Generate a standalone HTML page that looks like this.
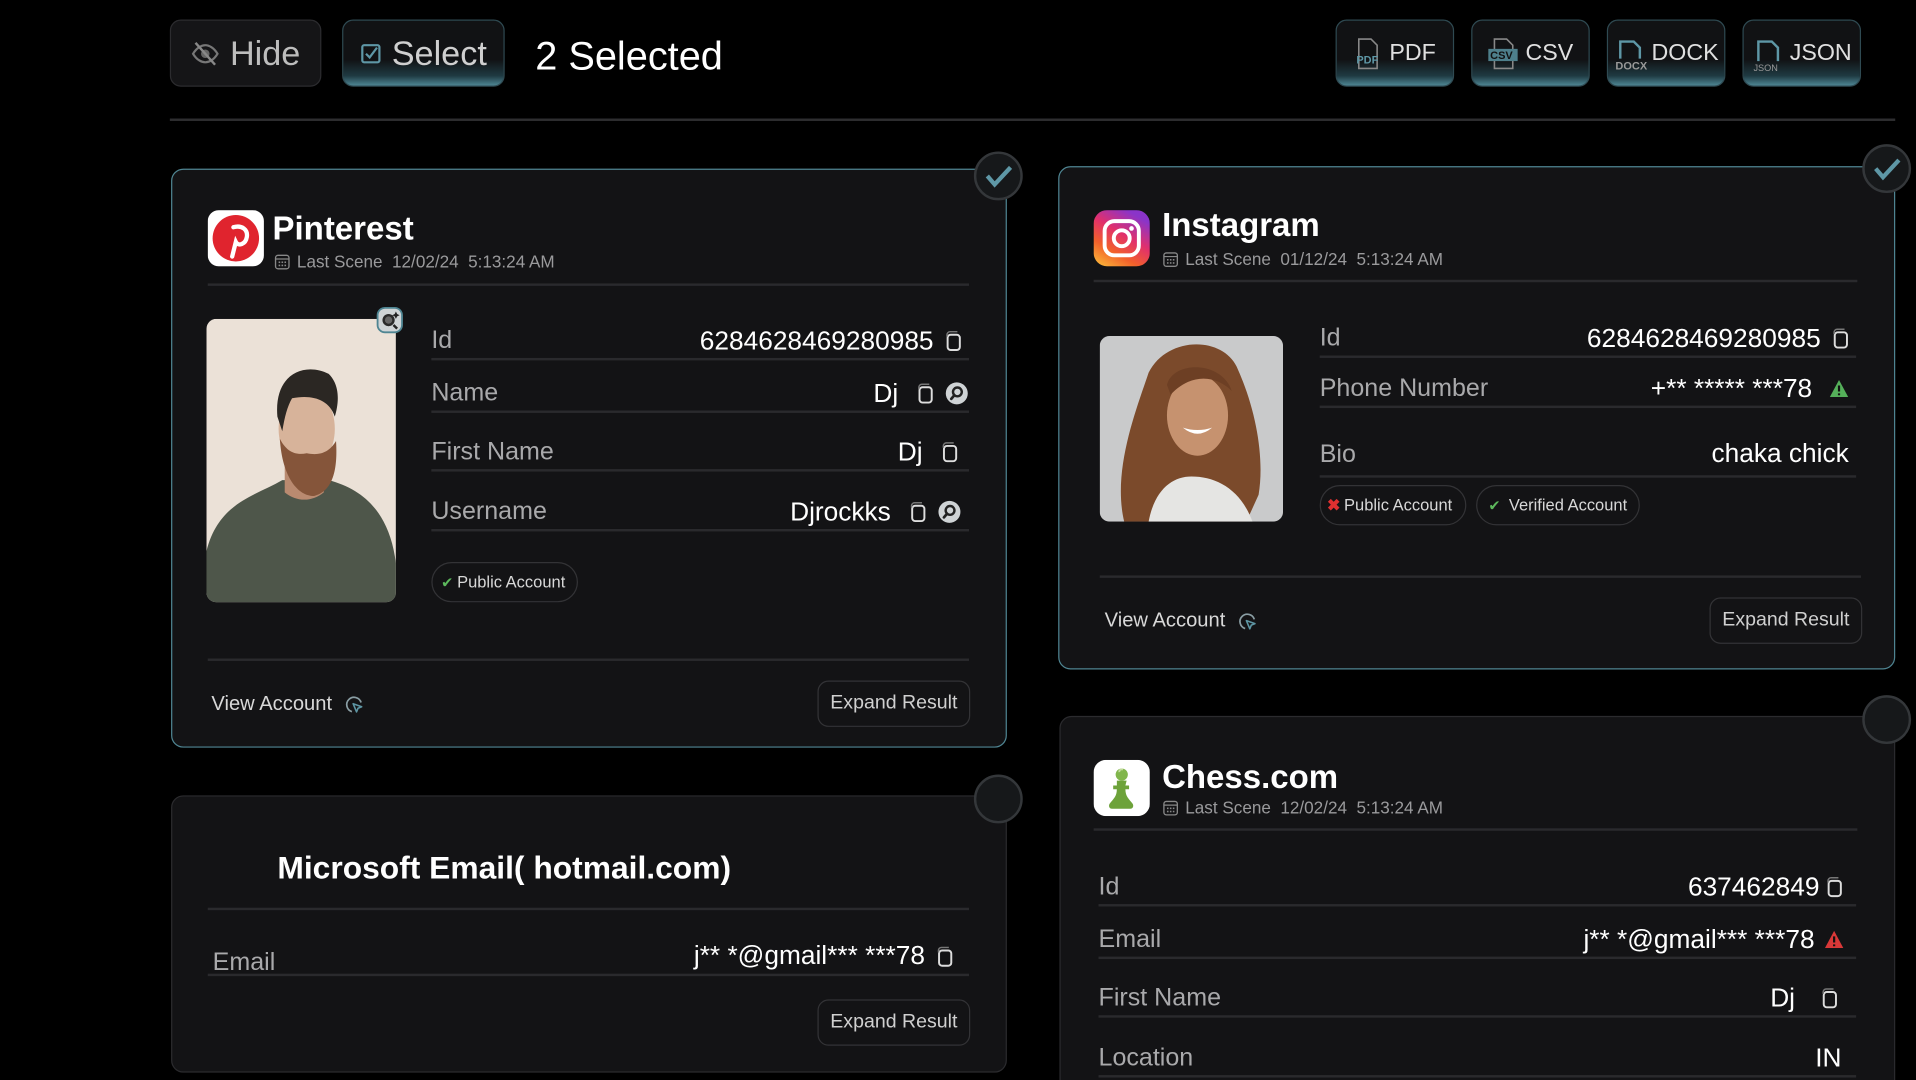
<!DOCTYPE html>
<html><head><meta charset="utf-8">
<style>
*{box-sizing:border-box;margin:0;padding:0}
html,body{width:1916px;height:1080px;overflow:hidden;background:#000;font-family:"Liberation Sans",sans-serif;color:#fff}
#w{position:absolute;left:0;top:0;width:1568px;height:884px;transform:scale(1.22194,1.2217);transform-origin:0 0;overflow:hidden}
.a{position:absolute}
.btn{position:absolute;border-radius:9px;background:#151517;border:1px solid #2c2c2f;display:flex;align-items:center;justify-content:center;color:#cfcfcf}
.glow{background:linear-gradient(#111214 0%,#111214 60%,#1f3a42 85%,#4e8593 100%);border:1px solid #2f4a52}
.card{position:absolute;background:#131315;border-radius:10px}
.sel{border:1.5px solid #4f8592}
.uns{border:1.5px solid #2b2b2e}
.chk{position:absolute;width:40px;height:40px;border-radius:50%;background:#16181a;border:2px solid #34373a}
.hr{position:absolute;height:2px;background:#2a2a2d}
.row{position:absolute;display:flex;justify-content:space-between;align-items:center;border-bottom:2px solid #2a2a2d;height:30px;font-size:20.5px;white-space:nowrap}
.row .l{color:#a9a9ab}
.row .v{display:flex;align-items:center;gap:8px;color:#fff;font-size:21.5px}
.title{position:absolute;font-size:27px;font-weight:bold}
.sub{position:absolute;font-size:14px;color:#9a9a9c;display:flex;align-items:center;gap:5px;white-space:nowrap}
.pill{position:absolute;height:33px;border:1px solid #333336;border-radius:17px;display:flex;align-items:center;padding:0 7px;font-size:13.5px;color:#d8d8d8;gap:3px;white-space:nowrap}
.exp{position:absolute;width:125px;height:38px;border:1px solid #333336;border-radius:9px;display:flex;align-items:center;justify-content:center;font-size:16px;color:#d0d0d0}
.va{position:absolute;font-size:16.5px;color:#d8d8d8;display:flex;align-items:center;gap:10px}
</style></head><body><div id="w">

<svg width="0" height="0" style="position:absolute"><defs>
<symbol id="cp" viewBox="0 0 16 18"><rect x="3.5" y="4" width="10" height="12.5" rx="2.5" fill="none" stroke="#ddd" stroke-width="1.6"/><path d="M3 5.5V4a2.5 2.5 0 0 1 2.5-2.5h6" fill="none" stroke="#777" stroke-width="1.2"/></symbol>
<symbol id="sr" viewBox="0 0 20 20"><circle cx="10" cy="10" r="9" fill="#cfd3d5"/><circle cx="10.5" cy="8.8" r="3.6" fill="none" stroke="#222" stroke-width="2"/><path d="M8 11.5 5.5 14.5" stroke="#222" stroke-width="2.2" stroke-linecap="round"/></symbol>
<symbol id="cal" viewBox="0 0 14 14"><rect x="1.5" y="2" width="11" height="11" rx="2" fill="none" stroke="#888" stroke-width="1.1"/><path d="M1.5 5h11" stroke="#888"/><g fill="#888"><rect x="4" y="7" width="1.3" height="1.3"/><rect x="6.4" y="7" width="1.3" height="1.3"/><rect x="8.8" y="7" width="1.3" height="1.3"/><rect x="4" y="9.6" width="1.3" height="1.3"/><rect x="6.4" y="9.6" width="1.3" height="1.3"/><rect x="8.8" y="9.6" width="1.3" height="1.3"/></g></symbol>
<symbol id="ptr" viewBox="0 0 16 16"><path d="M6 13.5A6 6 0 1 1 13.5 6" fill="none" stroke="#8a9ea4" stroke-width="1.4"/><path d="M7 7l7 2.5-3 1.2-1.2 3z" fill="none" stroke="#5d95a3" stroke-width="1.3" stroke-linejoin="round"/></symbol>
</defs></svg>

<!-- top bar -->
<div class="btn" style="left:139px;top:16px;width:124px;height:55px;font-size:28px;color:#bdbdbd;gap:8px">
<svg width="24" height="22" viewBox="0 0 24 22"><path d="M2 11c3-5 7-7 10-7s7 2 10 7c-3 5-7 7-10 7S5 16 2 11z" fill="none" stroke="#777" stroke-width="1.8"/><circle cx="12" cy="11" r="3.5" fill="#666"/><path d="M4 2l16 18" stroke="#888" stroke-width="2"/></svg>Hide</div>
<div class="btn glow" style="left:280px;top:16px;width:133px;height:55px;font-size:28px;color:#cfcfcf;gap:8px">
<svg width="18" height="18" viewBox="0 0 18 18"><rect x="1.5" y="2" width="14" height="14" rx="1.5" fill="none" stroke="#5e97a6" stroke-width="1.8"/><path d="M4.5 9l3 3 6-8" fill="none" stroke="#5e97a6" stroke-width="1.8"/></svg>Select</div>
<div class="a" style="left:438px;top:28px;font-size:32.5px;color:#fff">2 Selected</div>

<div class="btn glow" style="left:1093px;top:16px;width:97px;height:55px;font-size:19px;gap:5px;color:#e0e0e0"><svg width="24" height="28" viewBox="0 0 24 28"><path d="M4 2h10l5 5v19H4z" fill="none" stroke="#888" stroke-width="1.3"/><text x="2" y="22" font-size="9" font-family="Liberation Sans" font-weight="bold" fill="#5e97a6">PDF</text></svg>PDF</div>
<div class="btn glow" style="left:1204px;top:16px;width:97px;height:55px;font-size:19px;gap:5px;color:#e0e0e0"><svg width="26" height="28" viewBox="0 0 26 28"><path d="M6 2h10l5 5v19H6z" fill="none" stroke="#888" stroke-width="1.3"/><rect x="1" y="10" width="24" height="10" fill="#4e7f8b"/><text x="2.5" y="18.5" font-size="9" font-family="Liberation Sans" font-weight="bold" fill="#111">CSV</text></svg>CSV</div>
<div class="btn glow" style="left:1315px;top:16px;width:97px;height:55px;font-size:19px;gap:3px;color:#e0e0e0"><svg width="28" height="30" viewBox="0 0 28 30"><path d="M5 19V5h11l5 5v9" fill="none" stroke="#5e97a6" stroke-width="2"/><text x="1" y="28" font-size="9" font-family="Liberation Sans" font-weight="bold" fill="#999">DOCX</text></svg>DOCK</div>
<div class="btn glow" style="left:1426px;top:16px;width:97px;height:55px;font-size:19px;gap:5px;color:#e0e0e0"><svg width="26" height="30" viewBox="0 0 26 30"><path d="M5 21V5h11l5 5v11" fill="none" stroke="#5e97a6" stroke-width="2"/><text x="1" y="29" font-size="7.5" font-family="Liberation Sans" fill="#999">JSON</text></svg>JSON</div>

<div class="a" style="left:139px;top:97px;width:1412px;height:2px;background:#2e2e30"></div>

<!-- Pinterest -->
<div class="card sel" style="left:140px;top:138px;width:684px;height:474px"></div>
<div class="chk" style="left:797px;top:124px"><svg width="36" height="36" viewBox="0 0 36 36"><path d="M9 18l6 7 13-14" fill="none" stroke="#5e97a6" stroke-width="3.5"/></svg></div>
<svg class="a" style="left:170px;top:172px" width="46" height="46" viewBox="0 0 46 46"><rect width="46" height="46" rx="9" fill="#fff"/><circle cx="23" cy="23" r="19" fill="#e0242e"/><path d="M21 14c7-2 12 2 11 8-1 6-7 8-9 4l-3 12" fill="none" stroke="#fff" stroke-width="3.5" stroke-linecap="round"/></svg>
<div class="title" style="left:223px;top:172px">Pinterest</div>
<div class="sub" style="left:224px;top:206px"><svg width="14" height="14"><use href="#cal"/></svg>Last Scene&nbsp; 12/02/24&nbsp; 5:13:24 AM</div>
<div class="hr" style="left:170px;top:232px;width:623px"></div>

<svg class="a" style="left:169px;top:261px" width="155" height="232" viewBox="0 0 155 232"><defs><clipPath id="c1"><rect width="155" height="232" rx="8"/></clipPath></defs><g clip-path="url(#c1)"><rect width="155" height="232" fill="#ebe1d7"/><path d="M0 190 C10 150 40 145 62 132 L100 132 C130 140 150 160 155 200 V232 H0z" fill="#4e564a"/><path d="M64 120 h32 v22 c-10 8 -22 8 -32 0z" fill="#b98a70"/><ellipse cx="82" cy="90" rx="23" ry="33" fill="#d7b39a"/><path d="M58 80 C55 45 80 35 100 45 C110 55 108 70 105 80 C100 65 85 62 70 65 C66 72 64 80 62 92z" fill="#2b2723"/><path d="M60 98 C62 130 75 145 88 145 C100 142 108 130 106 100 C100 110 92 112 82 110 C72 112 65 108 60 98z" fill="#85553a"/></g></svg>
<svg class="a" style="left:308px;top:251px" width="22" height="22" viewBox="0 0 22 22"><rect x="1" y="1" width="20" height="20" rx="6" fill="#cfd4d6" stroke="#4f8592" stroke-width="1.5"/><circle cx="10" cy="11" r="5" fill="#2a2a2a"/><circle cx="10" cy="11" r="3" fill="#666"/><path d="M14 15l3 3" stroke="#222" stroke-width="2"/><path d="M16 4l1 2 2 1-2 1-1 2-1-2-2-1 2-1z" fill="#222"/></svg>

<div class="row" style="left:353px;top:265px;width:440px;padding-right:5px"><span class="l">Id</span><span class="v">6284628469280985 <svg width="16" height="18"><use href="#cp"/></svg></span></div>
<div class="row" style="left:353px;top:308px;width:440px"><span class="l">Name</span><span class="v">Dj&nbsp; <svg width="16" height="18"><use href="#cp"/></svg><svg width="20" height="20"><use href="#sr"/></svg></span></div>
<div class="row" style="left:353px;top:356px;width:440px;padding-right:8px"><span class="l">First Name</span><span class="v">Dj&nbsp; <svg width="16" height="18"><use href="#cp"/></svg></span></div>
<div class="row" style="left:353px;top:405px;width:440px;padding-right:6px"><span class="l">Username</span><span class="v">Djrockks&nbsp; <svg width="16" height="18"><use href="#cp"/></svg><svg width="20" height="20"><use href="#sr"/></svg></span></div>
<div class="pill" style="left:353px;top:460px;width:120px"><span style="color:#5cb85c;font-size:12px">✔</span>Public Account</div>
<div class="hr" style="left:170px;top:539px;width:623px"></div>
<div class="va" style="left:173px;top:567px">View Account <svg width="16" height="16"><use href="#ptr"/></svg></div>
<div class="exp" style="left:669px;top:557px">Expand Result</div>

<!-- Instagram -->
<div class="card sel" style="left:866px;top:136px;width:685px;height:412px"></div>
<div class="chk" style="left:1524px;top:118px"><svg width="36" height="36" viewBox="0 0 36 36"><path d="M9 18l6 7 13-14" fill="none" stroke="#5e97a6" stroke-width="3.5"/></svg></div>
<svg class="a" style="left:895px;top:172px" width="46" height="46" viewBox="0 0 46 46"><defs><linearGradient id="ig" x1="0" y1="1" x2="0.6" y2="0"><stop offset="0" stop-color="#fcc33b"/><stop offset=".35" stop-color="#f2602b"/><stop offset=".65" stop-color="#e1306c"/><stop offset="1" stop-color="#8a34c9"/></linearGradient></defs><rect width="46" height="46" rx="11" fill="url(#ig)"/><rect x="9" y="9" width="28" height="28" rx="8" fill="none" stroke="#fff" stroke-width="3.2"/><circle cx="23" cy="23" r="6.5" fill="none" stroke="#fff" stroke-width="3.2"/><circle cx="31" cy="15" r="1.9" fill="#fff"/></svg>
<div class="title" style="left:951px;top:169px">Instagram</div>
<div class="sub" style="left:951px;top:204px"><svg width="14" height="14"><use href="#cal"/></svg>Last Scene&nbsp; 01/12/24&nbsp; 5:13:24 AM</div>
<div class="hr" style="left:895px;top:229px;width:625px"></div>

<svg class="a" style="left:900px;top:275px" width="150" height="152" viewBox="0 0 150 152"><defs><clipPath id="c2"><rect width="150" height="152" rx="8"/></clipPath></defs><g clip-path="url(#c2)"><rect width="150" height="152" fill="#c9cacb"/><path d="M20 152 C10 110 30 60 40 30 C55 0 100 0 112 25 C128 60 135 100 130 130 L120 152z" fill="#7b4a2b"/><path d="M40 152 C45 125 60 115 75 115 C95 115 115 125 125 152z" fill="#e5e5e3"/><ellipse cx="80" cy="65" rx="25" ry="33" fill="#c6926f"/><path d="M68 75 q12 10 24 0 q-12 4 -24 0z" fill="#fff"/><path d="M55 40 C60 20 100 20 108 45 C95 32 75 30 58 48z" fill="#6d3f24"/></g></svg>

<div class="row" style="left:1080px;top:263px;width:439px;padding-right:5px"><span class="l">Id</span><span class="v">6284628469280985 <svg width="16" height="18"><use href="#cp"/></svg></span></div>
<div class="row" style="left:1080px;top:304px;width:439px;padding-right:6px"><span class="l">Phone Number</span><span class="v">+** ***** ***78&nbsp; <svg width="16" height="16" viewBox="0 0 16 16"><path d="M8 1L15.5 15H.5z" fill="#55b05a"/><path d="M8 5.5v5M8 12v1.5" stroke="#111" stroke-width="1.8"/></svg></span></div>
<div class="row" style="left:1080px;top:354px;width:439px;height:37px"><span class="l">Bio</span><span class="v" style="padding-right:6px">chaka chick</span></div>
<div class="pill" style="left:1080px;top:397px;width:120px;padding:0 5px"><span style="color:#e03030;font-size:13px;font-weight:bold">✖</span>Public Account</div>
<div class="pill" style="left:1208px;top:397px;width:134px;padding-left:9px"><span style="color:#5cb85c;font-size:12px">✔</span>&nbsp;Verified Account</div>
<div class="hr" style="left:900px;top:471px;width:623px"></div>
<div class="va" style="left:904px;top:499px">View Account <svg width="16" height="16"><use href="#ptr"/></svg></div>
<div class="exp" style="left:1399px;top:489px">Expand Result</div>

<!-- Microsoft -->
<div class="card uns" style="left:140px;top:651px;width:684px;height:227px"></div>
<div class="chk" style="left:797px;top:634px"></div>
<div class="a" style="left:227px;top:695px;font-size:26px;font-weight:bold">Microsoft Email( hotmail.com)</div>
<div class="hr" style="left:170px;top:743px;width:623px"></div>
<div class="row" style="left:170px;top:768px;width:623px;height:31px;padding-left:4px;padding-right:12px"><span class="l" style="margin-top:10px">Email</span><span class="v">j** *@gmail*** ***78 <svg width="16" height="18"><use href="#cp"/></svg></span></div>
<div class="exp" style="left:669px;top:818px">Expand Result</div>

<!-- Chess -->
<div class="card uns" style="left:867px;top:586px;width:684px;height:320px"></div>
<div class="chk" style="left:1524px;top:569px"></div>
<svg class="a" style="left:895px;top:622px" width="46" height="46" viewBox="0 0 46 46"><rect width="46" height="46" rx="10" fill="#fff"/><circle cx="23" cy="12" r="5" fill="#81b64c"/><path d="M19 17h8l-1 4h3v3h-3c0 6 3 8 6 12 1 2 0 4-2 4H15c-2 0-3-2-2-4 3-4 6-6 6-12h-3v-3h3z" fill="#6da23a"/><path d="M21 10a2 2 0 0 1 3-2" stroke="#c4dca0" stroke-width="1.5" fill="none"/></svg>
<div class="title" style="left:951px;top:621px">Chess.com</div>
<div class="sub" style="left:951px;top:653px"><svg width="14" height="14"><use href="#cal"/></svg>Last Scene&nbsp; 12/02/24&nbsp; 5:13:24 AM</div>
<div class="hr" style="left:895px;top:678px;width:625px"></div>
<div class="row" style="left:899px;top:712px;width:620px;padding-right:10px"><span class="l">Id</span><span class="v" style="gap:4px">637462849 <svg width="16" height="18"><use href="#cp"/></svg></span></div>
<div class="row" style="left:899px;top:755px;width:620px;padding-right:10px"><span class="l">Email</span><span class="v">j** *@gmail*** ***78 <svg width="16" height="16" viewBox="0 0 16 16"><path d="M8 1L15.5 15H.5z" fill="#d93838"/><path d="M8 5.5v5M8 12v1.5" stroke="#111" stroke-width="1.8"/></svg></span></div>
<div class="row" style="left:899px;top:803px;width:620px;padding-right:14px"><span class="l">First Name</span><span class="v" style="gap:20px">Dj <svg width="16" height="18"><use href="#cp"/></svg></span></div>
<div class="row" style="left:899px;top:852px;width:620px;padding-right:12px"><span class="l">Location</span><span class="v">IN</span></div>

</div></body></html>
